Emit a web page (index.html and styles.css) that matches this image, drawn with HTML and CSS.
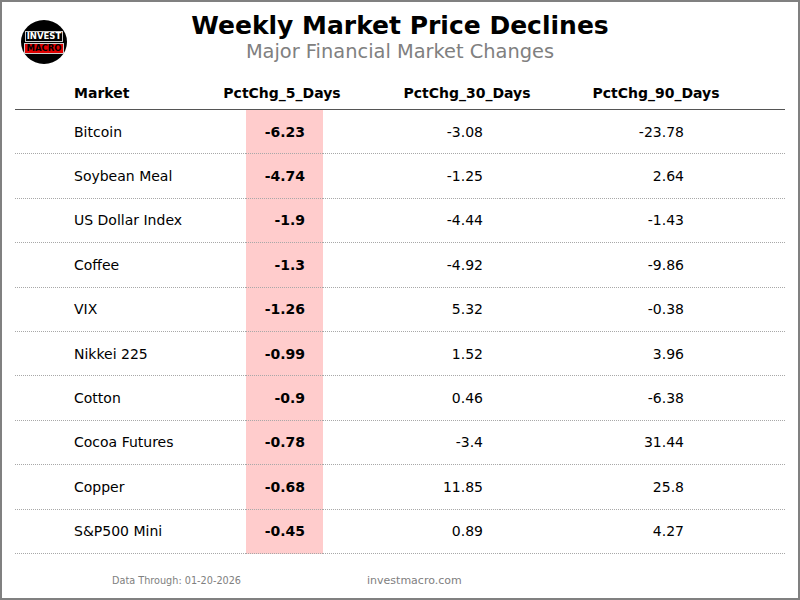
FILE: index.html
```html
<!DOCTYPE html>
<html>
<head>
<meta charset="utf-8">
<link rel="stylesheet" href="styles.css">
</head>
<body>
<div class="page">
  <header class="top">
    <div class="logo-cell">
      <div class="logo">
        <span class="logo-invest">INVEST</span>
        <span class="logo-macro">MACRO</span>
      </div>
    </div>
    <div class="titles">
      <h1 class="title">Weekly Market Price Declines</h1>
      <div class="subtitle">Major Financial Market Changes</div>
    </div>
    <div></div>
  </header>

  <div class="table">
    <div class="thead">
      <div class="th th-left">Market</div>
      <div class="th">PctChg_5_Days</div>
      <div class="th">PctChg_30_Days</div>
      <div class="th">PctChg_90_Days</div>
    </div>
    <div class="row"><div class="c name">Bitcoin</div><div class="c hl">-6.23</div><div class="c v30">-3.08</div><div class="c v90">-23.78</div></div>
    <div class="row"><div class="c name">Soybean Meal</div><div class="c hl">-4.74</div><div class="c v30">-1.25</div><div class="c v90">2.64</div></div>
    <div class="row"><div class="c name">US Dollar Index</div><div class="c hl">-1.9</div><div class="c v30">-4.44</div><div class="c v90">-1.43</div></div>
    <div class="row"><div class="c name">Coffee</div><div class="c hl">-1.3</div><div class="c v30">-4.92</div><div class="c v90">-9.86</div></div>
    <div class="row"><div class="c name">VIX</div><div class="c hl">-1.26</div><div class="c v30">5.32</div><div class="c v90">-0.38</div></div>
    <div class="row"><div class="c name">Nikkei 225</div><div class="c hl">-0.99</div><div class="c v30">1.52</div><div class="c v90">3.96</div></div>
    <div class="row"><div class="c name">Cotton</div><div class="c hl">-0.9</div><div class="c v30">0.46</div><div class="c v90">-6.38</div></div>
    <div class="row"><div class="c name">Cocoa Futures</div><div class="c hl">-0.78</div><div class="c v30">-3.4</div><div class="c v90">31.44</div></div>
    <div class="row"><div class="c name">Copper</div><div class="c hl">-0.68</div><div class="c v30">11.85</div><div class="c v90">25.8</div></div>
    <div class="row"><div class="c name">S&amp;P500 Mini</div><div class="c hl">-0.45</div><div class="c v30">0.89</div><div class="c v90">4.27</div></div>
  </div>

  <footer class="foot">
    <span class="foot-date">Data Through: 01-20-2026</span>
    <span class="foot-site">investmacro.com</span>
  </footer>
</div>
</body>
</html>
```

FILE: styles.css
```css
* { box-sizing: border-box; }
html, body { margin: 0; padding: 0; background: #fff; }
body { font-family: "DejaVu Sans", sans-serif; color: #000; }

.page {
  width: 800px;
  height: 600px;
  border: 2px solid #808080;
  overflow: hidden;
}

.top {
  display: grid;
  grid-template-columns: 1fr auto 1fr;
  padding-top: 9px;
  height: 63px;
}

.logo-cell { padding-left: 19px; padding-top: 9px; }
.logo {
  width: 46px;
  height: 44px;
  border-radius: 50%;
  background: #000;
  display: flex;
  flex-direction: column;
  align-items: center;
  justify-content: center;
  gap: 1px;
}
.logo-invest {
  font-size: 8.5px;
  font-weight: bold;
  color: #fff;
  line-height: 9px;
  padding: 0 1px;
  border: 1px solid #ccc;
}
.logo-macro {
  font-size: 8.5px;
  font-weight: bold;
  color: #000;
  background: #e00000;
  line-height: 9px;
  padding: 0 1px;
  border: 1px solid #ccc;
}

.titles { text-align: center; }
.title {
  margin: 0;
  font-size: 25px;
  line-height: 30px;
  font-weight: bold;
  color: #000;
}
.subtitle {
  font-size: 19.4px;
  line-height: 22px;
  color: #808080;
}

.table {
  margin: 12px 13px 0 13px;
}
.thead {
  display: grid;
  grid-template-columns: 231px 72px 298px 80px 1fr;
  height: 33px;
  border-bottom: 1px solid #555;
  align-items: center;
}
.th {
  display: flex;
  justify-content: center;
  white-space: nowrap;
  font-size: 14px;
  font-weight: bold;
}
.th-left { justify-content: flex-start; padding-left: 59px; }

.row {
  display: grid;
  grid-template-columns: 231px 77px 177px 1fr;
  height: 44.4px;
}
.c {
  display: flex;
  align-items: center;
  font-size: 14px;
  border-bottom: 1px dotted #a8a8a8;
  white-space: nowrap;
}
.name { padding-left: 59px; }
.hl {
  justify-content: flex-end;
  padding-right: 18px;
  background: #ffcccc;
  font-weight: bold;
}
.v30 { justify-content: flex-end; padding-right: 17px; }
.v90 { justify-content: flex-end; padding-right: 101px; }

.foot {
  display: flex;
  align-items: center;
  height: 44px;
  padding-top: 10px;
  padding-left: 110px;
}
.foot-date { font-size: 9.7px; color: #808080; }
.foot-site { font-size: 11px; color: #808080; margin-left: 126px; }
```
